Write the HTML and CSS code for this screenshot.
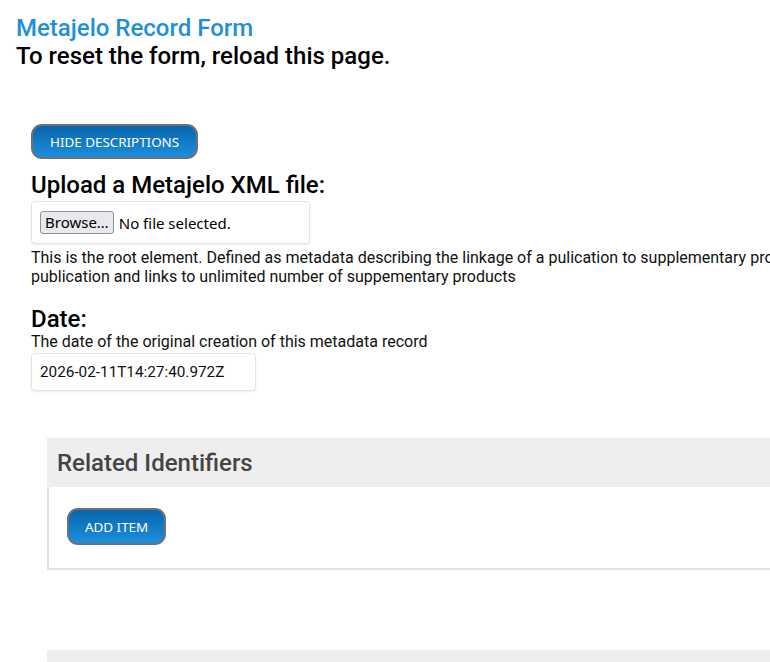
FILE: index.html
```html
<!DOCTYPE html>
<html lang="en">
<head>
<meta charset="utf-8">
<title>Metajelo Record Form</title>
<link rel="stylesheet" href="styles.css">
</head>
<body>
<div class="page">
  <header class="intro">
    <h1 class="title">Metajelo Record Form</h1>
    <h2 class="subtitle">To reset the form, reload this page.</h2>
  </header>

  <main class="form">
    <button class="btn btn-toggle" type="button">HIDE DESCRIPTIONS</button>

    <section class="field">
      <h3 class="field-label">Upload a Metajelo XML file:</h3>
      <div class="input-box file-box">
        <span class="file-btn">Browse…</span>
        <span class="file-text">No file selected.</span>
      </div>
      <p class="desc">This is the root element. Defined as metadata describing the linkage of a pulication to supplementary products, and is comprised of<br>publication and links to unlimited number of suppementary products</p>
    </section>

    <section class="field">
      <h3 class="field-label">Date:</h3>
      <p class="desc desc-tight">The date of the original creation of this metadata record</p>
      <div class="input-box date-box">2026-02-11T14:27:40.972Z</div>
    </section>

    <section class="panel">
      <div class="panel-head">Related Identifiers</div>
      <div class="panel-body">
        <button class="btn btn-add" type="button">ADD ITEM</button>
      </div>
    </section>

    <section class="panel">
      <div class="panel-head"></div>
    </section>
  </main>
</div>
</body>
</html>
```

FILE: styles.css
```css
html {
  overflow: hidden;
}
body {
  margin: 0;
  background: #fff;
  font-family: Roboto, "Liberation Sans", sans-serif;
  color: #000;
}
.page {
  width: 1100px;
  padding: 15px 0 0 16px;
}
.intro {
  display: flex;
  flex-direction: column;
}
.title {
  margin: 0;
  font-size: 24px;
  font-weight: 500;
  line-height: 26px;
  color: #1e8fdc;
}
.subtitle {
  margin: 0;
  font-size: 24px;
  font-weight: 500;
  line-height: 30px;
  color: #000;
}
.form {
  padding: 53px 0 0 15px;
  display: flex;
  flex-direction: column;
  align-items: flex-start;
}
.btn {
  font-family: "Noto Sans", "Open Sans", sans-serif;
  font-size: 13.4px;
  color: #fff;
  background: linear-gradient(#0866ac, #1b8fdd);
  border: 2px solid #6d6f7b;
  border-radius: 11px;
  cursor: pointer;
}
.btn-toggle {
  height: 35px;
  padding: 0 17px;
}
.field {
  display: flex;
  flex-direction: column;
  align-items: flex-start;
}
.field-label {
  margin: 13px 0 0;
  font-size: 24px;
  font-weight: 500;
  line-height: 26px;
}
.input-box {
  background: #fff;
  border: 1px solid #e4e4e4;
  border-radius: 4px;
  box-shadow: 0 1px 2px rgba(0,0,0,0.08);
  box-sizing: border-box;
}
.file-box {
  margin-top: 3px;
  width: 279px;
  height: 43px;
  display: flex;
  align-items: center;
  padding: 0 8px;
  gap: 5px;
  font-family: "Noto Sans", "Open Sans", sans-serif;
  font-size: 15px;
}
.file-btn {
  border: 1px solid #8f8f9d;
  border-radius: 3px;
  background: #e9e9ed;
  padding: 0 4px;
  line-height: 21px;
  color: #000;
}
.file-text {
  color: #000;
}
.desc {
  margin: 4px 0 0;
  font-size: 16px;
  line-height: 19px;
  color: #111;
}
.desc-tight {
  margin: 0;
}
.date-box {
  margin-top: 2px;
  width: 225px;
  height: 38px;
  padding: 0 8px;
  display: flex;
  align-items: center;
  font-size: 15.3px;
  color: #111;
}
.field + .field .field-label {
  margin-top: 20px;
}
.panel {
  align-self: stretch;
  margin: 47px 0 0 16px;
  display: flex;
  flex-direction: column;
}
.panel + .panel {
  margin-top: 80px;
}
.panel-head {
  background: #eeeeee;
  height: 49px;
  padding: 0 10px;
  display: flex;
  align-items: center;
  font-size: 24px;
  font-weight: 500;
  color: #444;
}
.panel-body {
  border-left: 2px solid #e2e2e2;
  border-bottom: 2px solid #e2e2e2;
  padding: 21px 18px 23px;
  display: flex;
}
.btn-add {
  height: 37px;
  padding: 0 16px;
}
```
